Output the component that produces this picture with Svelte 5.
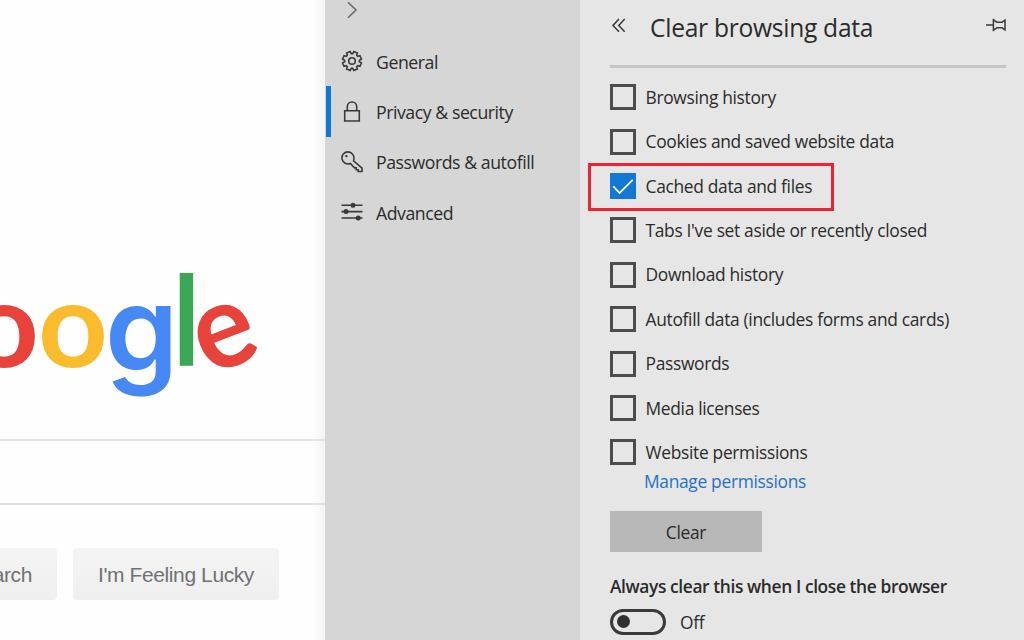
<script lang="ts">
  const logo = [
    { char: "o", color: "#e8433a", transform: "translate(-31 157) scale(.99 .965)" },
    { char: "o", color: "#fabb2d", transform: "translate(38 157) scale(.99 .965)" },
    { char: "g", color: "#4688f4", transform: "translate(105 161) scale(1.02 1.03)", inter: true },
    { char: "l", color: "#3ba655", transform: "translate(173 156) scale(.88 1.02)" },
    { char: "e", color: "#e8433a", transform: "translate(208 166) rotate(-21) scale(.92 .97)" }
  ];

  const nav = [
    { id: "general", label: "General" },
    { id: "privacy", label: "Privacy & security" },
    { id: "passwords", label: "Passwords & autofill" },
    { id: "advanced", label: "Advanced" }
  ];

  let active = $state("privacy");

  let items = $state([
    { label: "Browsing history", checked: false },
    { label: "Cookies and saved website data", checked: false },
    { label: "Cached data and files", checked: true, marked: true },
    { label: "Tabs I've set aside or recently closed", checked: false },
    { label: "Download history", checked: false },
    { label: "Autofill data (includes forms and cards)", checked: false },
    { label: "Passwords", checked: false },
    { label: "Media licenses", checked: false },
    { label: "Website permissions", checked: false }
  ]);

  let alwaysClear = $state(false);

  // gear outline with eight square teeth
  function gearPath(teeth = 8, outer = 9.6, inner = 7.4) {
    const points: string[] = [];
    const step = (Math.PI * 2) / teeth;
    for (let i = 0; i < teeth; i++) {
      const a = i * step + step / 2;
      for (const [offset, r] of [[-0.29, inner], [-0.2, outer], [0.2, outer], [0.29, inner]]) {
        points.push(`${(11 + r * Math.cos(a + offset)).toFixed(2)} ${(11 + r * Math.sin(a + offset)).toFixed(2)}`);
      }
    }
    return `M${points.join("L")}Z`;
  }
</script>

<div class="screen">
  <main class="page">
    <svg class="logo" viewBox="0 0 325 225" width="325" height="225" role="img" aria-label="Google">
      {#each logo as letter}
        <text class:inter={letter.inter} transform={letter.transform} fill={letter.color}>{letter.char}</text>
      {/each}
    </svg>
    <div class="search"></div>
    <div class="buttons">
      <button class="google-btn first">Google Search</button>
      <button class="google-btn">I'm Feeling Lucky</button>
    </div>
  </main>

  <nav class="sidebar">
    <button class="collapse" aria-label="Collapse">
      <svg width="12" height="20" viewBox="0 0 12 20"><path d="M2 2.2 10 10 2 17.8" /></svg>
    </button>
    {#each nav as item}
      <button class="nav-item" class:active={active === item.id} onclick={() => (active = item.id)}>
        <svg width="22" height="22" viewBox="0 0 22 22">
          {#if item.id === "general"}
            <path d={gearPath()} />
            <circle cx="11" cy="11" r="3.3" />
          {:else if item.id === "privacy"}
            <path d="M3.7 9.7H18.3V20H3.7ZM6.3 9.5V5.7a4.7 4.7 0 0 1 9.4 0V9.5" />
          {:else if item.id === "passwords"}
            <path d="M12.6 9.9 21 17.1V20.5H17.2V18.7H15.2V16.9H13.5L9.4 12.4A6 6 0 1 1 12.8 8.3Z" />
            <circle class="solid" cx="5.4" cy="5.1" r="1.2" />
          {:else}
            <path d="M.5 4.2H21.5M.5 10.6H21.5M.5 17H21.5" />
            <circle class="solid" cx="12" cy="4.2" r="2.5" />
            <circle class="solid" cx="5" cy="10.6" r="2.5" />
            <circle class="solid" cx="17.2" cy="17" r="2.5" />
          {/if}
        </svg>
        <span>{item.label}</span>
      </button>
    {/each}
  </nav>

  <section class="panel">
    <header>
      <button class="back" aria-label="Back">
        <svg width="14" height="15" viewBox="0 0 14 15"><path d="M7 1 1 7.4 7 13.8M12.7 1 6.7 7.4 12.7 13.8" /></svg>
      </button>
      <h1>Clear browsing data</h1>
      <button class="pin" aria-label="Pin">
        <svg width="20" height="14" viewBox="0 0 20 14">
          <path d="M0 7H7M7.4 .8V13.2M7.4 1.8 11 4.2H16L19 2.2V11.8L16 9.8H11L7.4 12.2" />
        </svg>
      </button>
    </header>

    <div class="list">
      {#each items as item}
        <label class="row">
          <input type="checkbox" bind:checked={item.checked} />
          <span class="box">
            {#if item.checked}
              <svg width="26" height="26" viewBox="0 0 26 26"><path d="M3.3 13.4 9.6 20 22.7 6.9" /></svg>
            {/if}
          </span>
          <span class="text">{item.label}</span>
          {#if item.marked}
            <span class="marker"></span>
          {/if}
        </label>
      {/each}
    </div>
    <a class="manage" href="#manage">Manage permissions</a>
    <button class="clear">Clear</button>

    <h2>Always clear this when I close the browser</h2>
    <div class="toggle-row">
      <button
        class="toggle"
        class:on={alwaysClear}
        role="switch"
        aria-checked={alwaysClear}
        aria-label="Always clear"
        onclick={() => (alwaysClear = !alwaysClear)}
      ><span></span></button>
      <span>{alwaysClear ? "On" : "Off"}</span>
    </div>
  </section>
</div>

<style>
  :global(body) {
    margin: 0;
    overflow: hidden;
  }

  .screen {
    display: flex;
    width: 1024px;
    height: 640px;
    overflow: hidden;
    background: #fff;
    color: #2b2b2b;
    font-family: "Open Sans", "Noto Sans", sans-serif;
    font-size: 17.4px;
    letter-spacing: -0.32px;
  }

  button {
    padding: 0;
    border: 0;
    background: none;
    color: inherit;
    font: inherit;
    letter-spacing: inherit;
  }

  svg {
    display: block;
    flex: none;
    fill: none;
    stroke: #3a3a3a;
    stroke-width: 1.6;
  }

  .page {
    display: flex;
    flex: none;
    flex-direction: column;
    width: 325px;
    overflow: hidden;
    background: linear-gradient(to right, #fefefe 312px, #f4f4f4 325px);
  }

  .logo {
    overflow: visible;
    margin-top: 210px;
    stroke: none;
    font-family: Lato, sans-serif;
    font-size: 123px;
    font-weight: 700;
    letter-spacing: 0;
  }

  .logo .inter {
    font-family: Inter, sans-serif;
    font-size: 115px;
    font-weight: 600;
  }

  .search {
    box-sizing: border-box;
    height: 66px;
    margin-top: 4px;
    border-top: 2px solid #e2e2e2;
    border-bottom: 2px solid #e0e0e0;
  }

  .buttons {
    display: flex;
    gap: 16px;
    margin-top: 43px;
  }

  .google-btn {
    flex: none;
    width: 206px;
    height: 52px;
    padding-top: 1px;
    border-radius: 4px;
    background: linear-gradient(#f4f4f4, #efefef);
    color: #707174;
    font-family: "Liberation Sans", Arial, sans-serif;
    font-size: 21px;
    letter-spacing: -0.4px;
  }

  .google-btn.first {
    width: 182px;
    margin-left: -125px;
    padding-right: 3px;
  }

  .sidebar {
    display: flex;
    flex: none;
    flex-direction: column;
    width: 255px;
    background: #d6d6d6;
  }

  .collapse {
    height: 36px;
    padding-left: 21px;
    text-align: left;
  }

  .collapse svg {
    margin-top: -17px;
    stroke: #6a6a6a;
  }

  .nav-item {
    display: flex;
    box-sizing: border-box;
    align-items: center;
    gap: 13px;
    height: 50.4px;
    margin-left: 1px;
    padding-left: 10px;
    border-left: 5px solid transparent;
    font-size: 17.7px;
    letter-spacing: -0.45px;
  }

  .nav-item span {
    margin-top: 1px;
  }

  .nav-item.active {
    border-left-color: #0f78d7;
  }

  .solid {
    fill: #3a3a3a;
    stroke: none;
  }

  .panel {
    display: flex;
    flex: 1;
    flex-direction: column;
    align-items: flex-start;
    padding-left: 30px;
    background: #e6e6e6;
  }

  header {
    display: flex;
    box-sizing: border-box;
    align-items: center;
    width: 396px;
    height: 68px;
    padding: 0 0 11px 2px;
    border-bottom: 3px solid #c5c5c5;
  }

  .back svg,
  .pin svg {
    margin-top: -4px;
    stroke-width: 1.5;
  }

  h1 {
    flex: 1;
    margin: 0 0 0 24px;
    font-size: 24.6px;
    font-weight: 400;
    letter-spacing: -0.28px;
  }

  .list {
    margin-top: 7px;
  }

  .row {
    position: relative;
    display: flex;
    align-items: center;
    gap: 9.5px;
    height: 44.42px;
  }

  .text {
    margin-top: -1px;
  }

  .row input {
    position: absolute;
    opacity: 0;
  }

  .box {
    box-sizing: border-box;
    flex: none;
    width: 26px;
    height: 26px;
    border: 3px solid #4c4c4c;
  }

  input:checked + .box {
    border: 0;
    background: #1277d5;
  }

  .box svg {
    stroke: #fff;
    stroke-width: 1.8;
  }

  .marker {
    position: absolute;
    top: -1px;
    left: -22px;
    box-sizing: border-box;
    width: 246px;
    height: 48px;
    border: 3px solid #ee2433;
  }

  .manage {
    margin: -6px 0 0 34px;
    color: #2472c8;
    line-height: 24px;
    text-decoration: none;
  }

  .clear {
    width: 152px;
    height: 41px;
    margin-top: 18px;
    padding-top: 1px;
    background: #b8b8b8;
  }

  h2 {
    margin: 22px 0 0;
    font-size: 17.4px;
    font-weight: 600;
    letter-spacing: -0.4px;
    line-height: 24px;
  }

  .toggle-row {
    display: flex;
    align-items: center;
    gap: 14px;
    margin-top: 11px;
  }

  .toggle {
    display: flex;
    box-sizing: border-box;
    align-items: center;
    width: 56px;
    height: 26px;
    padding: 0 4px;
    border: 3px solid #3a3a3a;
    border-radius: 13px;
  }

  .toggle.on {
    justify-content: flex-end;
  }

  .toggle span {
    width: 13px;
    height: 13px;
    border-radius: 50%;
    background: #303030;
  }
</style>
